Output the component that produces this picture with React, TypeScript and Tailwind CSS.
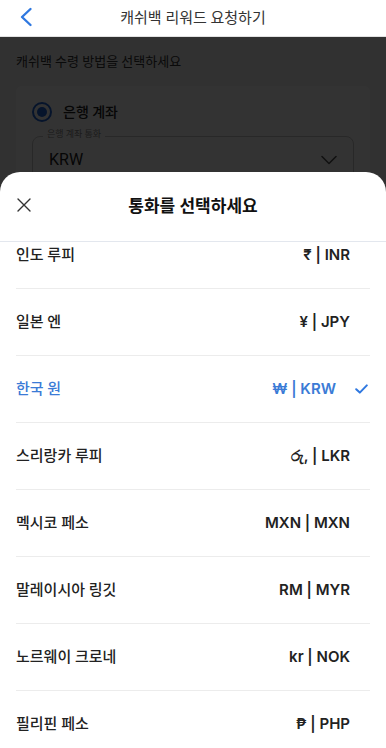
import React from "react";

const rows = [
  { name: "인도 루피", code: "₹ | INR" },
  { name: "일본 엔", code: "¥ | JPY" },
  { name: "한국 원", code: "₩ | KRW", selected: true },
  { name: "스리랑카 루피", code: "රු, | LKR" },
  { name: "멕시코 페소", code: "MXN | MXN" },
  { name: "말레이시아 링깃", code: "RM | MYR" },
  { name: "노르웨이 크로네", code: "kr | NOK" },
  { name: "필리핀 페소", code: "₱ | PHP" },
];

export default function App() {
  return (
    <div
      className="relative w-[386px] h-[748px] overflow-hidden bg-white"
      style={{ fontFamily: '"Roboto", "Noto Sans CJK KR", sans-serif' }}
    >
      {/* Top nav */}
      <div className="relative z-0 h-[37px] flex items-center justify-center border-b border-[#e2e2e2] bg-white">
        <svg className="absolute left-[19px] top-[7px]" width="14" height="20" viewBox="0 0 14 20" fill="none">
          <path d="M11.5 2 L3 10 L11.5 18" stroke="#2f78e0" strokeWidth="2.4" strokeLinecap="round" strokeLinejoin="round" />
        </svg>
        <span className="text-[15px] text-[#333]">캐쉬백 리워드 요청하기</span>
      </div>

      {/* Underlying page */}
      <div className="bg-[#f4f4f4] h-[711px] px-4 pt-[15px]">
        <div className="text-[13px] text-[#333]">캐쉬백 수령 방법을 선택하세요</div>
        <div className="mt-[14px] bg-white rounded-[6px] px-4 pt-[16px] pb-6">
          <div className="flex items-center gap-[11px]">
            <div className="w-[20px] h-[20px] rounded-full border-2 border-[#1e63d6] flex items-center justify-center">
              <div className="w-[10px] h-[10px] rounded-full bg-[#1e63d6]" />
            </div>
            <span className="text-[14px] font-medium text-[#222]">은행 계좌</span>
          </div>
          <div className="relative mt-[13px] h-[48px] border border-[#c8c8c8] rounded-[8px] flex items-center justify-between pl-4 pr-4">
            <span className="absolute -top-[7px] left-[10px] bg-white px-1 text-[9px] text-[#888] leading-none">은행 계좌 통화</span>
            <span className="text-[16px] text-[#222]">KRW</span>
            <svg width="16" height="10" viewBox="0 0 16 10" fill="none">
              <path d="M1 1.5 L8 8.5 L15 1.5" stroke="#555" strokeWidth="1.6" strokeLinecap="round" strokeLinejoin="round" />
            </svg>
          </div>
        </div>
      </div>

      {/* Dim overlay */}
      <div className="absolute left-0 right-0 top-[37px] bottom-0 bg-black/80" />

      {/* Bottom sheet */}
      <div className="absolute left-0 right-0 top-[172px] bottom-0 bg-white rounded-t-[20px] flex flex-col">
        <div className="relative h-[70px] flex items-center justify-center border-b border-[#e3e7ee] shrink-0">
          <svg className="absolute left-[17px] top-[26px]" width="14" height="14" viewBox="0 0 14 14" fill="none">
            <path d="M1 1 L13 13 M13 1 L1 13" stroke="#333" strokeWidth="1.4" strokeLinecap="round" />
          </svg>
          <span className="text-[17px] font-bold text-[#111] mt-[1px]">통화를 선택하세요</span>
        </div>
        <div className="flex-1 overflow-hidden">
          <div className="-mt-[20px]">
            {rows.map((r) => (
              <div key={r.name} className="mx-4 h-[67px] border-b border-[#ececec] flex items-center justify-between">
                <span className={`text-[15px] font-medium ${r.selected ? "text-[#3b7bd6]" : "text-[#222]"}`}>{r.name}</span>
                <div className="flex items-center">
                  <span
                    className={`text-[15px] font-semibold ${r.selected ? "text-[#3b7bd6]" : "text-[#222]"}`}
                    style={{ fontFamily: '"Inter", "Noto Sans", "Noto Sans CJK KR", sans-serif' }}
                  >
                    {r.code}
                  </span>
                  {r.selected ? (
                    <div className="w-[34px] flex justify-end pr-[2px]">
                      <svg width="13" height="10" viewBox="0 0 13 10" fill="none">
                        <path d="M1.2 5.2 L4.8 8.6 L11.8 1.4" stroke="#2f78e0" strokeWidth="2" strokeLinecap="round" strokeLinejoin="round" />
                      </svg>
                    </div>
                  ) : (
                    <div className="w-[20px]" />
                  )}
                </div>
              </div>
            ))}
          </div>
        </div>
      </div>
    </div>
  );
}
